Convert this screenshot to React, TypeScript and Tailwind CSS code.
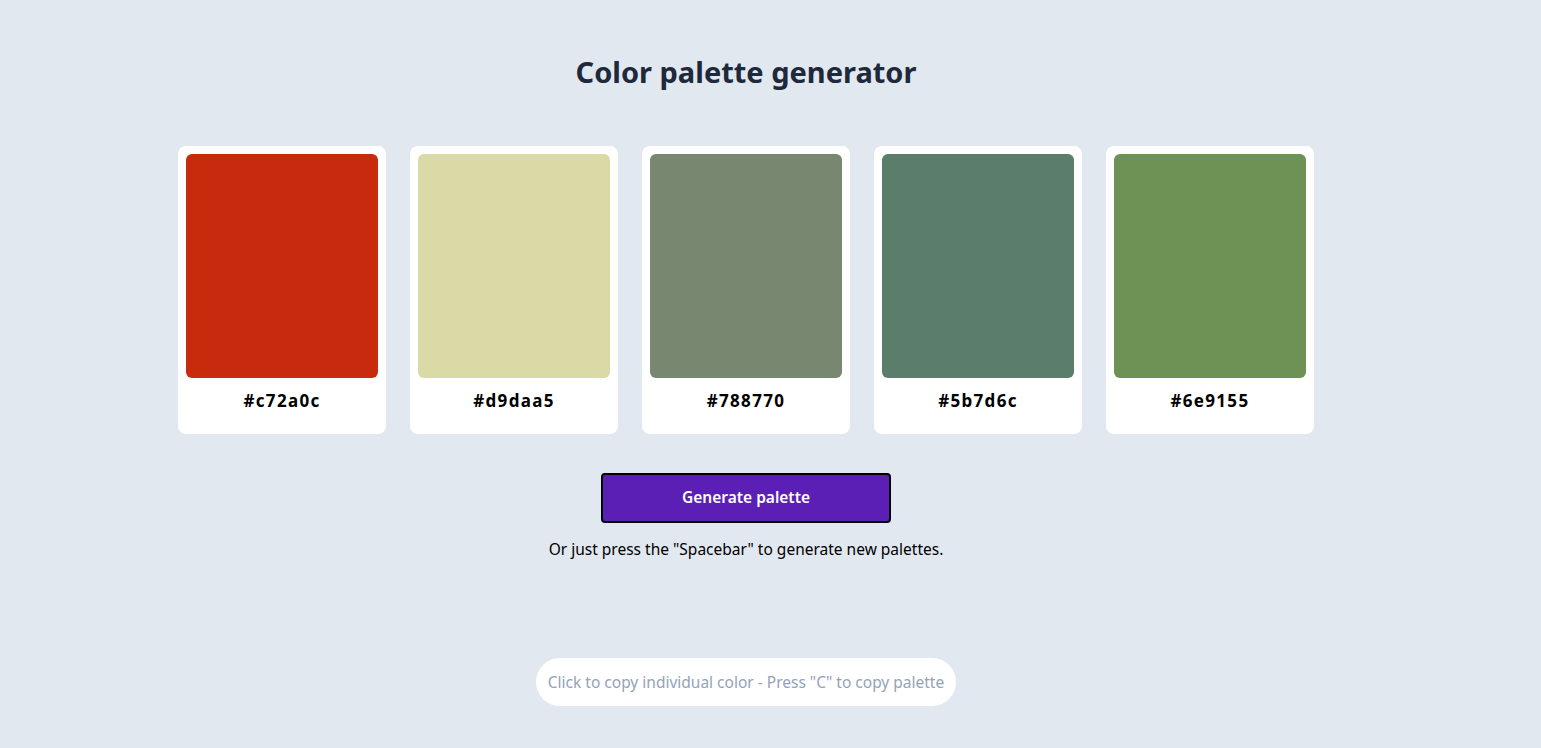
import React from "react";

const colors = ["#c72a0c", "#d9daa5", "#788770", "#5b7d6c", "#6e9155"];

export default function App() {
  return (
    <div
      className="min-h-[748px] w-full bg-[#e2e8f0]"
      style={{ fontFamily: '"Noto Sans", "Open Sans", sans-serif' }}
    >
      <div className="flex w-[1492px] flex-col items-center">
        <h1 className="mt-[52px] text-[29px] font-bold leading-[40px] text-[#1e293b]">
          Color palette generator
        </h1>
        <div className="mt-[54px] flex gap-6">
          {colors.map((c) => (
            <div
              key={c}
              className="flex h-[288px] w-[208px] flex-col rounded-lg bg-white p-2"
            >
              <div className="h-[224px] w-full rounded-md" style={{ backgroundColor: c }} />
              <div className="mt-[11px] text-center text-[17px] font-bold leading-[24px] tracking-[1.3px] text-black">
                {c}
              </div>
            </div>
          ))}
        </div>
        <button className="mt-[39px] h-[50px] w-[290px] rounded-[4px] border-2 border-black bg-[#5b1fb5] text-[15.5px] font-semibold text-white">
          Generate palette
        </button>
        <p className="mt-[14px] text-[15.5px] leading-[24px] text-black">
          Or just press the "Spacebar" to generate new palettes.
        </p>
        <div className="mt-[97px] flex h-[48px] w-[420px] items-center justify-center rounded-full bg-white pt-[1px] text-[15.5px] text-[#94a3b8]">
          Click to copy individual color - Press "C" to copy palette
        </div>
      </div>
    </div>
  );
}
